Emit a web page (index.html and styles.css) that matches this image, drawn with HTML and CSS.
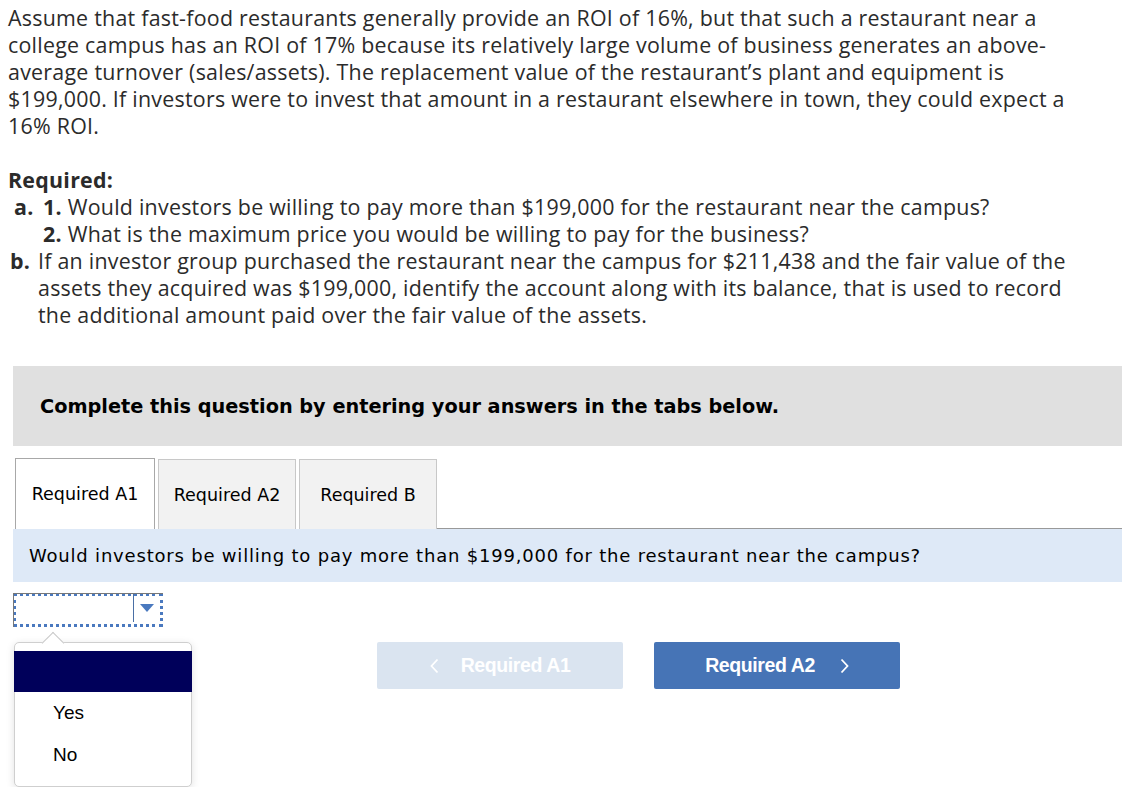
FILE: index.html
```html
<!DOCTYPE html>
<html>
<head>
<meta charset="utf-8">
<link rel="stylesheet" href="styles.css">
</head>
<body>
<div class="problem">
  <p class="intro">Assume that fast-food restaurants generally provide an ROI of 16%, but that such a restaurant near a<br>college campus has an ROI of 17% because its relatively large volume of business generates an above-<br>average turnover (sales/assets). The replacement value of the restaurant’s plant and equipment is<br>$199,000. If investors were to invest that amount in a restaurant elsewhere in town, they could expect a<br>16% ROI.</p>
  <p class="req-title">Required:</p>
  <div class="req-list">
    <div class="req-item item-a">
      <span class="mark">a.</span>
      <div class="req-body">
        <div><b>1.</b> Would investors be willing to pay more than $199,000 for the restaurant near the campus?</div>
        <div><b>2.</b> What is the maximum price you would be willing to pay for the business?</div>
      </div>
    </div>
    <div class="req-item item-b">
      <span class="mark">b.</span>
      <div class="req-body">If an investor group purchased the restaurant near the campus for $211,438 and the fair value of the<br>assets they acquired was $199,000, identify the account along with its balance, that is used to record<br>the additional amount paid over the fair value of the assets.</div>
    </div>
  </div>
</div>

<div class="instructions">Complete this question by entering your answers in the tabs below.</div>

<div class="tabs">
  <div class="tab active">Required A1</div>
  <div class="tab">Required A2</div>
  <div class="tab">Required B</div>
  <div class="tab-fill"></div>
</div>
<div class="question">Would investors be willing to pay more than $199,000 for the restaurant near the campus?</div>

<div class="answer-area">
  <div class="left-col">
    <div class="select">
      <div class="select-value"></div>
      <div class="select-btn"><span class="tri"></span></div>
    </div>
    <div class="popup">
      <div class="opt selected"></div>
      <div class="opt">Yes</div>
      <div class="opt">No</div>
    </div>
  </div>
  <div class="nav">
    <div class="btn btn-prev"><svg class="chev chev-l" width="9" height="16" viewBox="0 0 9 16"><polyline points="7.5,1.5 1.5,8 7.5,14.5" fill="none" stroke="#fff" stroke-width="1.8"/></svg>Required A1</div>
    <div class="btn btn-next">Required A2<svg class="chev chev-r" width="9" height="16" viewBox="0 0 9 16"><polyline points="1.5,1.5 7.5,8 1.5,14.5" fill="none" stroke="#fff" stroke-width="1.8"/></svg></div>
  </div>
</div>
</body>
</html>
```
FILE: styles.css
```css
html, body { margin: 0; padding: 0; background: #fff; }
body { padding: 4px 7px 0 8px; }

.problem {
  font-family: "Open Sans", Lato, sans-serif;
  font-size: 21.4px;
  line-height: 27px;
  letter-spacing: 0.25px;
  color: #2b2b2b;
}
.intro { margin: 0; white-space: nowrap; }
.req-title { margin: 27px 0 0 0; font-weight: bold; }
.req-list { display: flex; flex-direction: column; }
.req-item { display: flex; }
.item-a .mark { width: 29px; padding-left: 6px; }
.item-b .mark { width: 28px; padding-left: 2px; }
.mark { font-weight: bold; flex: none; }
.req-body { flex: 1; white-space: nowrap; }

.instructions {
  margin: 38px -1px 0 5px;
  height: 80px;
  background: #e0e0e0;
  display: flex;
  align-items: center;
  padding-left: 27px;
  font-family: "DejaVu Sans", Verdana, sans-serif;
  font-weight: bold;
  font-size: 19.3px;
  color: #000;
}

.tabs {
  display: flex;
  align-items: flex-end;
  margin: 12px -1px 0 5px;
  height: 71px;
  gap: 3px;
}
.tab {
  box-sizing: border-box;
  height: 70px;
  border: 1px solid #c8c8c8;
  border-bottom: none;
  background: #f2f2f2;
  font-family: "DejaVu Sans", Verdana, sans-serif;
  font-size: 17.5px;
  color: #000;
  display: flex;
  align-items: center;
  justify-content: center;
  width: 138px;
}
.tab.active {
  margin-left: 2px;
  width: 140px;
  height: 71px;
  background: #fff;
  border-color: #a8a8a8;
}
.tab-fill {
  flex: 1;
  border-bottom: 1px solid #999;
  margin-left: -3px;
}
.question {
  margin: 0 -1px 0 5px;
  height: 53px;
  background: #dee9f7;
  display: flex;
  align-items: center;
  padding-left: 16px;
  font-family: "DejaVu Sans", Verdana, sans-serif;
  font-size: 18px;
  letter-spacing: 0.8px;
  color: #000;
}

.answer-area {
  display: flex;
  margin-left: 5px;
  margin-top: 11px;
}
.left-col { width: 179px; flex: none; }
.select {
  width: 150px;
  height: 34px;
  box-sizing: border-box;
  border: 3px dotted #4a79bf;
  display: flex;
  position: relative;
}
.select::before {
  content: "";
  position: absolute;
  left: -3px; top: -3px; right: -3px;
  height: 1px;
  background: #777;
}
.select::after {
  content: "";
  position: absolute;
  left: -3px; top: -3px; bottom: -3px;
  width: 1px;
  background: #777;
}
.select-value { flex: 1; border-right: 1px solid #4a6fa5; margin: -2px 0 2px 0; }
.select-btn { width: 26px; display: flex; align-items: center; justify-content: center; }
.tri {
  width: 0; height: 0;
  border-left: 7px solid transparent;
  border-right: 7px solid transparent;
  border-top: 8px solid #4a79bf;
  margin-top: -4px;
}
.popup {
  margin-top: 15px;
  margin-left: 1px;
  width: 178px;
  height: 145px;
  box-sizing: border-box;
  border: 1px solid #cfcfcf;
  border-radius: 5px;
  background: #fff;
  box-shadow: 0 2px 8px rgba(0,0,0,0.12);
  padding-top: 8px;
  position: relative;
  font-family: "Liberation Sans", Arial, sans-serif;
  font-size: 19px;
  color: #000;
}
.popup::before {
  content: "";
  position: absolute;
  top: -8px; left: 30px;
  width: 15px; height: 15px;
  background: #fff;
  border-left: 1px solid #c8c8c8;
  border-top: 1px solid #c8c8c8;
  transform: rotate(45deg);
}
.opt { height: 42px; display: flex; align-items: center; padding-left: 38px; position: relative; }
.opt.selected { height: 41px; background: #00005a; margin: 0 -1px; }

.nav {
  display: flex;
  gap: 31px;
  margin-left: 185px;
  margin-top: 49px;
}
.btn {
  width: 246px;
  height: 47px;
  border-radius: 2px;
  display: flex;
  align-items: center;
  justify-content: center;
  font-family: "Liberation Sans", Arial, sans-serif;
  font-weight: bold;
  font-size: 19.5px;
  color: #fff;
  letter-spacing: -0.4px;
}
.btn-prev { background: #dae4f0; }
.btn-next { background: #4674b6; }
.chev-l { margin-right: 22px; }
.chev-r { margin-left: 25px; }
```
